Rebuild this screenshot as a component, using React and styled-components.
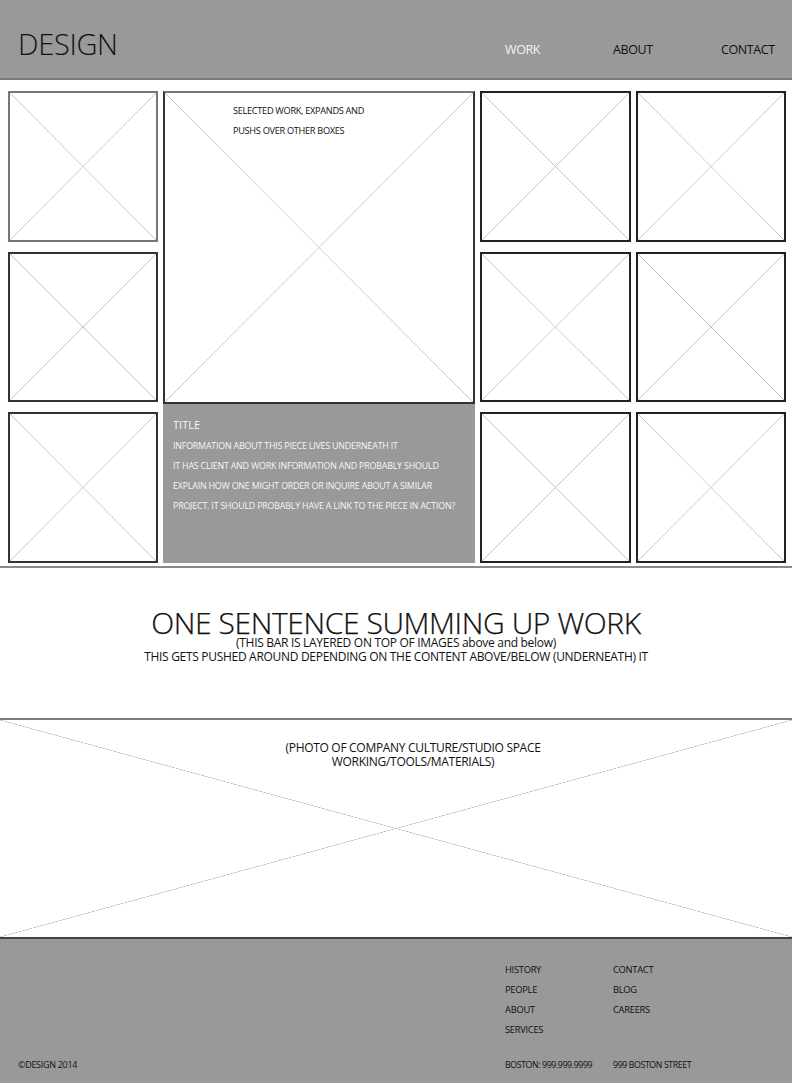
import styled, { createGlobalStyle } from "styled-components";

const GlobalStyle = createGlobalStyle`
    html, body {
        margin: 0;
        padding: 0;
        background: #ffffff;
    }
    body {
        font-family: "Open Sans", "Noto Sans", sans-serif;
        color: #111111;
    }
`

const crossLines = (color) => `
    linear-gradient(to top right, transparent calc(50% - 0.6px), ${color} 50%, transparent calc(50% + 0.6px)),
    linear-gradient(to bottom right, transparent calc(50% - 0.6px), ${color} 50%, transparent calc(50% + 0.6px))
`

const Page = styled.div`
    width: 792px;
    display: flex;
    flex-direction: column;
`

const Header = styled.header`
    height: 78px;
    background-color: #999999;
    border-bottom: 2px solid #7a7a7a;
    display: flex;
    align-items: center;
    justify-content: space-between;
    padding-left: 18px;
`

const Logo = styled.h1`
    margin: 0;
    font-family: "Open Sans", sans-serif;
    font-weight: 300;
    font-size: 29px;
    letter-spacing: -0.3px;
    color: #111111;
    padding-top: 8px;
`

const Nav = styled.nav`
    display: grid;
    grid-template-columns: 108px 108px 71px;
    padding-top: 20px;
`

const NavLink = styled.a`
    font-size: 12.5px;
    letter-spacing: -0.4px;
    color: ${props => props.$active ? "#f4f4f4" : "#111111"};
    text-decoration: none;
`

const Grid = styled.section`
    display: grid;
    grid-template-columns: 150px 312px 151px 150px;
    grid-template-rows: 151px 150px 151px;
    column-gap: 5px;
    row-gap: 10px;
    padding: 11px 6px 3px 8px;
`

const Tile = styled.div`
    box-sizing: border-box;
    border: 2px solid ${props => props.$tone || "#222222"};
    background: ${crossLines("#c4c4c4")};
    background-color: #ffffff;
`

const Feature = styled.div`
    grid-column: 2;
    grid-row: 1 / span 3;
    display: flex;
    flex-direction: column;
`

const FeatureImage = styled.div`
    box-sizing: border-box;
    height: 313px;
    border: 2px solid #333333;
    border-top-color: #777777;
    background: ${crossLines("#c4c4c4")};
    background-color: #ffffff;
    padding: 8px 0 0 68px;
`

const Note = styled.p`
    margin: 0;
    font-size: 9.2px;
    line-height: 20px;
    letter-spacing: -0.3px;
    color: #111111;
`

const InfoPanel = styled.div`
    flex: 1;
    background-color: #999999;
    padding: 12px 10px;
    color: #f6f6f6;
`

const InfoTitle = styled.h3`
    margin: 0 0 2px;
    font-size: 11px;
    font-weight: 400;
    line-height: 18px;
`

const InfoLine = styled.p`
    margin: 0;
    font-size: 8.9px;
    line-height: 20px;
    letter-spacing: -0.2px;
`

const Statement = styled.section`
    border-top: 2px solid #8a8a8a;
    border-bottom: 2px solid #7a7a7a;
    height: 154px;
    box-sizing: border-box;
    display: flex;
    flex-direction: column;
    align-items: center;
    padding-top: 42px;
`

const Headline = styled.h2`
    margin: 0;
    font-weight: 300;
    font-size: 30px;
    line-height: 26px;
    letter-spacing: -0.4px;
    color: #111111;
    -webkit-text-stroke: 0.25px #111111;
`

const SubLine = styled.p`
    margin: 0;
    font-size: 12px;
    line-height: 14px;
    letter-spacing: -0.3px;
`

const Photo = styled.section`
    height: 219px;
    box-sizing: border-box;
    border-bottom: 2px solid #444444;
    background: ${crossLines("#b8b8b8")};
    background-color: #ffffff;
    display: flex;
    flex-direction: column;
    align-items: center;
    padding: 21px 0 0 34px;
`

const PhotoCaption = styled.p`
    margin: 0;
    font-size: 12px;
    line-height: 14px;
    letter-spacing: -0.3px;
    text-align: center;
`

const Footer = styled.footer`
    height: 145px;
    background-color: #999999;
    box-sizing: border-box;
    display: flex;
    justify-content: space-between;
    align-items: flex-end;
    padding: 21px 0 12px 18px;
`

const Copyright = styled.span`
    font-size: 9px;
    letter-spacing: -0.3px;
    line-height: 14px;
`

const FooterNav = styled.div`
    width: 287px;
    align-self: stretch;
    display: flex;
    flex-direction: column;
    justify-content: space-between;
`

const LinkGrid = styled.div`
    display: grid;
    grid-template-columns: 108px 108px;
    grid-auto-flow: column;
    grid-template-rows: repeat(4, 20px);
`

const FooterLink = styled.a`
    font-size: 9.4px;
    letter-spacing: -0.3px;
    line-height: 20px;
    color: #111111;
    text-decoration: none;
`

const FooterInfo = styled.div`
    display: grid;
    grid-template-columns: 108px 108px;
`

const FooterText = styled.span`
    font-size: 8.8px;
    letter-spacing: -0.4px;
    line-height: 14px;
`

const tileTones = ["#777777", "#222222", "#222222", "#333333", "#222222", "#222222", "#333333", "#222222", "#222222"]

export default function App() {
    return (
        <Page>
            <GlobalStyle />
            <Header>
                <Logo>DESIGN</Logo>
                <Nav>
                    <NavLink $active>WORK</NavLink>
                    <NavLink>ABOUT</NavLink>
                    <NavLink>CONTACT</NavLink>
                </Nav>
            </Header>

            <Grid>
                <Tile $tone={tileTones[0]} style={{ gridColumn: 1, gridRow: 1 }} />
                <Feature>
                    <FeatureImage>
                        <Note>SELECTED WORK, EXPANDS AND</Note>
                        <Note>PUSHS OVER OTHER BOXES</Note>
                    </FeatureImage>
                    <InfoPanel>
                        <InfoTitle>TITLE</InfoTitle>
                        <InfoLine>INFORMATION ABOUT THIS PIECE LIVES UNDERNEATH IT</InfoLine>
                        <InfoLine>IT HAS CLIENT AND WORK INFORMATION AND PROBABLY SHOULD</InfoLine>
                        <InfoLine>EXPLAIN HOW ONE MIGHT ORDER OR INQUIRE ABOUT A SIMILAR</InfoLine>
                        <InfoLine>PROJECT. IT SHOULD PROBABLY HAVE A LINK TO THE PIECE IN ACTION?</InfoLine>
                    </InfoPanel>
                </Feature>
                <Tile $tone={tileTones[1]} />
                <Tile $tone={tileTones[2]} />
                <Tile $tone={tileTones[3]} />
                <Tile $tone={tileTones[4]} />
                <Tile $tone={tileTones[5]} />
                <Tile $tone={tileTones[6]} />
                <Tile $tone={tileTones[7]} />
                <Tile $tone={tileTones[8]} />
            </Grid>

            <Statement>
                <Headline>ONE SENTENCE SUMMING UP WORK</Headline>
                <SubLine>(THIS BAR IS LAYERED ON TOP OF IMAGES above and below)</SubLine>
                <SubLine>THIS GETS PUSHED AROUND DEPENDING ON THE CONTENT ABOVE/BELOW (UNDERNEATH) IT</SubLine>
            </Statement>

            <Photo>
                <PhotoCaption>(PHOTO OF COMPANY CULTURE/STUDIO SPACE</PhotoCaption>
                <PhotoCaption>WORKING/TOOLS/MATERIALS)</PhotoCaption>
            </Photo>

            <Footer>
                <Copyright>©DESIGN 2014</Copyright>
                <FooterNav>
                    <LinkGrid>
                        <FooterLink>HISTORY</FooterLink>
                        <FooterLink>PEOPLE</FooterLink>
                        <FooterLink>ABOUT</FooterLink>
                        <FooterLink>SERVICES</FooterLink>
                        <FooterLink>CONTACT</FooterLink>
                        <FooterLink>BLOG</FooterLink>
                        <FooterLink>CAREERS</FooterLink>
                    </LinkGrid>
                    <FooterInfo>
                        <FooterText>BOSTON: 999.999.9999</FooterText>
                        <FooterText>999 BOSTON STREET</FooterText>
                    </FooterInfo>
                </FooterNav>
            </Footer>
        </Page>
    );
}
